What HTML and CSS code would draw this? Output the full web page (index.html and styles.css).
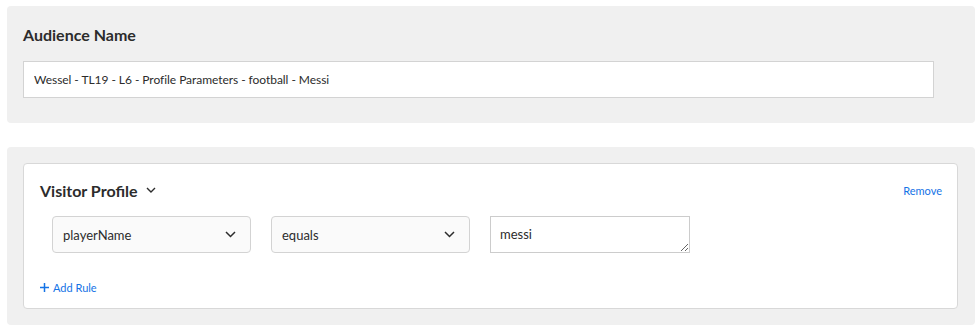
FILE: index.html
```html
<!DOCTYPE html>
<html>
  <head>
    <meta charset="utf-8">
    <title>Audience</title>
    <link rel="stylesheet" href="styles.css">
  </head>
  <body>
    <div class="page">
      <div class="panel name-panel">
        <h2 class="panel-title">Audience Name</h2>
        <input class="name-input" type="text" value="Wessel - TL19 - L6 - Profile Parameters - football - Messi">
      </div>

      <div class="panel rules-panel">
        <div class="card">
          <div class="card-head">
            <div class="card-title">
              Visitor Profile
              <svg class="title-chev" width="10" height="6" viewBox="0 0 10 6"><path d="M1 1 L5 5 L9 1" fill="none" stroke="#2c2c2c" stroke-width="1.4"/></svg>
            </div>
            <a class="link remove" href="#">Remove</a>
          </div>
          <div class="rule-row">
            <div class="select">
              <span>playerName</span>
              <svg width="11" height="7" viewBox="0 0 11 7"><path d="M1 1 L5.5 5.5 L10 1" fill="none" stroke="#2c2c2c" stroke-width="1.5"/></svg>
            </div>
            <div class="select">
              <span>equals</span>
              <svg width="11" height="7" viewBox="0 0 11 7"><path d="M1 1 L5.5 5.5 L10 1" fill="none" stroke="#2c2c2c" stroke-width="1.5"/></svg>
            </div>
            <textarea class="value">messi</textarea>
          </div>
          <a class="link add-rule" href="#">
            <svg width="9" height="9" viewBox="0 0 9 9"><path d="M4.5 0 V9 M0 4.5 H9" stroke="#1473e6" stroke-width="1.5"/></svg>
            Add Rule
          </a>
        </div>
      </div>
    </div>
  </body>
</html>
```

FILE: styles.css
```css
* {
  box-sizing: border-box;
}
body {
  margin: 0;
  background: #fff;
  font-family: Lato, "Open Sans", sans-serif;
  color: #2c2c2c;
}
.page {
  padding: 6px 3px 0 7px;
  display: flex;
  flex-direction: column;
  gap: 24px;
}
.panel {
  background: #f0f0f0;
  border-radius: 4px;
}
.name-panel {
  padding: 16px 41px 25px 16px;
}
.panel-title {
  margin: 0 0 13px 0;
  font-size: 16px;
  line-height: 26px;
  font-weight: 700;
}
.name-input {
  display: block;
  width: 100%;
  height: 37px;
  border: 1px solid #d3d3d3;
  background: #fff;
  padding: 0 10px;
  font-family: inherit;
  font-size: 12px;
  letter-spacing: -0.05px;
  color: #2c2c2c;
}
.rules-panel {
  padding: 16px 17px 16px 16px;
}
.card {
  background: #fff;
  border: 1px solid #d8d8d8;
  border-radius: 4px;
  padding: 15px 15px 13px 16px;
}
.card-head {
  display: flex;
  justify-content: space-between;
  align-items: center;
  height: 22px;
  margin-bottom: 15px;
}
.card-title {
  font-size: 16px;
  font-weight: 700;
  display: flex;
  align-items: center;
  gap: 8px;
}
.link {
  color: #1473e6;
  text-decoration: none;
  font-size: 11px;
}
.rule-row {
  display: flex;
  gap: 20px;
  margin-left: 12px;
}
.select {
  width: 199px;
  height: 37px;
  background: #fafafa;
  border: 1px solid #d3d3d3;
  border-radius: 4px;
  display: flex;
  align-items: center;
  justify-content: space-between;
  padding: 0 14px 0 10px;
  font-size: 13px;
}
.value {
  width: 200px;
  height: 37px;
  border: 1px solid #cccccc;
  padding: 9px 9px;
  font-family: inherit;
  font-size: 13px;
  line-height: 17px;
  color: #2c2c2c;
  resize: both;
}
.add-rule {
  display: flex;
  align-items: center;
  gap: 4px;
  margin-top: 26px;
  height: 16px;
}
```
